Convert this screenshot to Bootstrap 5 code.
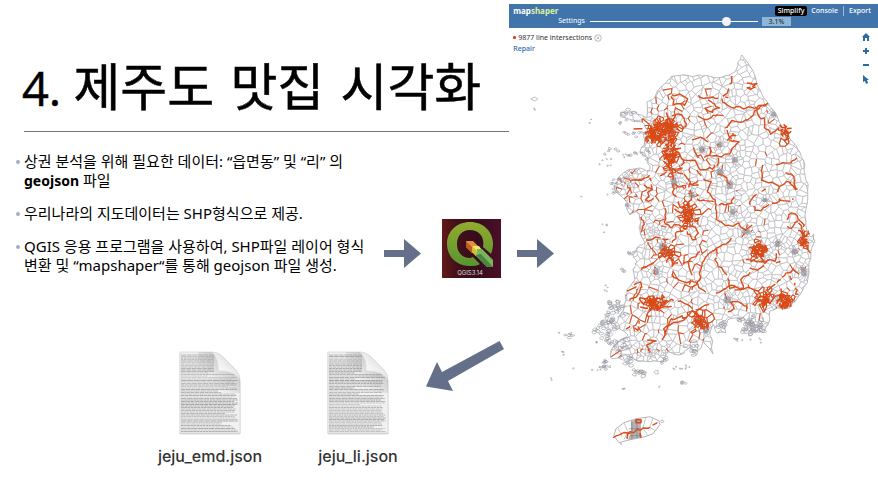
<!DOCTYPE html>
<html lang="ko">
<head>
<meta charset="utf-8">
<meta name="viewport" content="width=device-width, initial-scale=1">
<title>제주도 맛집 시각화</title>
<link href="https://cdn.jsdelivr.net/npm/bootstrap@5.3.0/dist/css/bootstrap.min.css" rel="stylesheet">
<script src="https://cdn.jsdelivr.net/npm/bootstrap@5.3.0/dist/js/bootstrap.bundle.min.js" defer></script>
<style>
body{font-family:"Open Sans","Noto Sans CJK KR",sans-serif;color:#000;background:#fff}
.left-side{flex:58 1 0;min-width:0}
.right-side{flex:42 1 0;min-width:0;padding-top:4px;font-family:"Noto Sans","Noto Sans CJK KR",sans-serif}
.slide-title{font-size:51px;line-height:64px;font-weight:400;padding:56px 0 0 22px;margin:0;white-space:pre;-webkit-text-stroke:.5px #000;font-family:"DejaVu Sans","Noto Sans CJK KR",sans-serif}
.slide-title span{font-family:"Open Sans",sans-serif;font-size:47px}
.rule{margin:10px 0 0 24px;border-top:1px solid #777}
.flow{padding:20px 8px 0 16px}
.points{width:360px;font-size:15px;line-height:19px;font-family:"Noto Sans","Noto Sans CJK KR",sans-serif}
.points b{font-size:14px}
.points li{position:relative;padding-left:8px;margin-bottom:14px;white-space:nowrap}
.points li::before{content:"";position:absolute;left:0;top:8px;width:4px;height:4px;border-radius:50%;background:#a5aec0}
.arrow{fill:#64708a;display:block}
.to-qgis{margin:87px 0 0 8px}
.qgis{margin:67px 0 0 21px}
.files{padding:51px 0 0 150px}
.file-item{width:120px;font-family:Inter,sans-serif;font-size:16px;line-height:24px;color:#333;font-weight:500}
.file-item figcaption{margin-top:6px}
.file-row{gap:28px;padding-top:10px}
.back{margin:0 0 0 8px}
.app-bar{background:#4174ab;color:#fff;font-size:7px;line-height:10px;height:24px;padding:1px 7px 0 4px}
.brand{font-weight:700;font-size:8px;line-height:11px;color:#fff;text-decoration:none}
.brand span{color:#dff29a}
.bar-btn{border:0;background:none;color:#fff;font-size:7px;line-height:10px;padding:0 5px;font-weight:500}
.bar-btn.on{background:#000;border-radius:2px;padding:0 3px}
.bar-btn.sep{border-left:1px solid #9dbbd8}
.set-row{padding-left:45px}
.pct{width:29px;height:9px;border:0;background:#8fb6d9;font-size:7px;line-height:9px;text-align:center;color:#222;padding:0;margin-left:4px}
.slide-in{-webkit-appearance:none;appearance:none;width:168px;height:9px;background:none;margin:0 0 0 5px;flex:0 1 168px;min-width:0}
.slide-in::-webkit-slider-runnable-track{height:1px;background:#fff}
.slide-in::-webkit-slider-thumb{-webkit-appearance:none;width:9px;height:9px;margin-top:-4px;border-radius:50%;background:#f3f3f3;border:0}
.map-area{position:relative}
.map-svg{display:block;width:100%;height:auto}
.notice{position:absolute;left:4px;top:4px;font-size:7px;line-height:11px;color:#333}
.notice a{color:#2c6ca5;text-decoration:none;font-weight:500}
.notice-line{gap:2px}
.dotm{width:3px;height:3px;background:#d9481c;border-radius:1px}
.tools{position:absolute;right:8px;top:4px;gap:4px}
.tools button{border:0;background:none;padding:0;line-height:0}
.to-map{position:absolute;left:8px;top:211px}
</style>
</head>
<body>
<main class="d-flex align-items-start">
<section class="left-side">
  <h1 class="slide-title"><span>4. </span>제주도 맛집 시각화</h1>
  <div class="rule"></div>
  <div class="flow d-flex align-items-start">
    <ul class="points list-unstyled mb-0 flex-shrink-0">
      <li>상권 분석을 위해 필요한 데이터: “읍면동” 및 “리” 의<br><b>geojson</b> 파일</li>
      <li>우리나라의 지도데이터는 SHP형식으로 제공.</li>
      <li>QGIS 응용 프로그램을 사용하여, SHP파일 레이어 형식<br>변환 및 “mapshaper“를 통해 geojson 파일 생성.</li>
    </ul>
    <svg class="arrow to-qgis flex-shrink-0" width="37" height="29"><path d="M0 11H20V0L37 14.500 20 29V18H0Z"/></svg>
    <svg class="qgis flex-shrink-0" width="59" height="59" viewBox="0 0 59 59" role="img" aria-label="QGIS3.14">
      <defs>
        <linearGradient id="qbg"><stop offset="0" stop-color="#611a18"/><stop offset=".25" stop-color="#421019"/><stop offset=".6" stop-color="#360c1c"/><stop offset="1" stop-color="#4b1028"/></linearGradient>
        <linearGradient id="qg" x2="0" y2="1"><stop offset="0" stop-color="#92ab30"/><stop offset="1" stop-color="#58942f"/></linearGradient>
      </defs>
      <rect width="59" height="59" fill="url(#qbg)"/>
      <path fill="url(#qg)" fill-rule="evenodd" d="M28 3C41 3 51 12 51 25C51 29 50 32 49 35L41 28C43 18 37 11 28 11C20 11 15 17 15 25C15 33 20 39 28 39L31 38L38 45C35 47 32 47 28 47C15 47 5 38 5 25C5 12 15 3 28 3Z"/>
      <path fill="#df9045" d="M24 22H31L37 28 30 34 24 28Z"/><path fill="#bd5c22" d="M24 22L30 28V34L24 28Z"/>
      <path fill="#f0e664" d="M31 27H37L40 31 34 37 30 33Z"/><path fill="#d0bb32" d="M30 27L34 31V37L30 33Z"/>
      <path fill="#78b55c" d="M35 30H40L51 41V48H45L34 37Z"/><path fill="#4b873c" d="M34 36L39 35 51 48H45Z"/>
      <text x="28" y="56" fill="#ddd" text-anchor="middle" font-family="Inter,sans-serif" font-size="6">QGIS3.14</text>
    </svg>
  </div>
  <div class="files d-flex align-items-start">
    <div class="file-row d-flex" id="files"></div>
    <svg class="arrow back flex-shrink-0" width="78" height="52" viewBox="426 336 78 52"><path d="M499.500 337L504 345 448 377 453 387 426 382.500 437 358 442 368Z"/></svg>
  </div>
</section>
<section class="right-side">
  <header class="app-bar">
    <div class="d-flex justify-content-between align-items-center">
      <a class="brand" href="#">map<span>shaper</span></a>
      <nav class="d-flex"><button class="bar-btn on me-1" type="button">Simplify</button><button class="bar-btn ps-0" type="button">Console</button><button class="bar-btn sep pe-0" type="button">Export</button></nav>
    </div>
    <div class="set-row d-flex align-items-center"><label for="amount">Settings</label><input class="slide-in" id="amount" type="range" min="0" max="100" value="83"><input class="pct" type="text" value="3.1%" aria-label="percent"></div>
  </header>
  <div class="map-area">
    <svg class="map-svg" id="map" viewBox="509 28 369 449"></svg>
    <div class="notice"><div class="notice-line d-flex align-items-center"><span class="dotm"></span><span>9877 line intersections</span>
      <svg width="8" height="8" fill="none" stroke="#aaa" stroke-width=".8"><circle cx="4" cy="4" r="3.300"/><path d="M2.700 2.700L5.300 5.300M5.300 2.700L2.700 5.300"/></svg></div><a href="#">Repair</a></div>
    <div class="tools d-flex flex-column align-items-center">
      <button type="button" aria-label="Home"><svg width="8" height="10" fill="#2b6ca6"><path d="M4 1L8 5H7V9H5V6H3V9H1V5H0Z"/></svg></button>
      <button type="button" aria-label="Zoom in"><svg width="8" height="10" fill="#2b6ca6"><path d="M3 2H5V4H7V6H5V8H3V6H1V4H3Z"/></svg></button>
      <button type="button" aria-label="Zoom out"><svg width="8" height="10" fill="#2b6ca6"><path d="M1 4H7V6H1Z"/></svg></button>
      <button type="button" aria-label="Select"><svg width="8" height="10" fill="#2b6ca6"><path d="M1 1L7 6H5L6 9 4 10 3 7 1 8Z"/></svg></button>
    </div>
    <svg class="arrow to-map" width="37" height="29"><path d="M0 11H20V0L37 14.500 20 29V18H0Z"/></svg>
  </div>
</section>
</main>
<script>
let seed=7;
const rnd=()=>{seed=(seed*1664525+1013904223)%4294967296;return seed/4294967296};
const gauss=()=>(rnd()+rnd()+rnd()-1.5)*1.3;
const f=n=>n.toFixed(1);
const coast=[742,55,750,66,757,85,768,103,778,118,786,132,793,142,800,152,805,165,806,180,808,195,806,210,806,225,808,237,814,234,815,241,811,252,809,270,808,280,803,290,795,302,790,308,778,308,770,311,768,325,762,333,748,330,745,320,738,318,728,320,726,333,716,332,713,325,710,335,713,354,703,342,697,355,690,348,680,355,668,352,663,362,650,362,635,360,625,355,612,359,611,351,621,340,628,335,615,325,622,312,626,300,627,290,635,280,633,270,637,262,633,255,640,245,645,243,640,230,641,222,637,212,630,215,625,200,615,190,618,178,628,170,640,168,650,170,648,158,640,152,645,140,643,133,648,130,642,122,622,117,621,112,635,112,647,118,647,102,655,97,660,88,668,80,675,76,700,75,712,77,725,76,735,72,738,62];
const jeju=[614,436,616,429,624,423,636,419,650,417,659,421,660,425,653,434,645,437,635,439,626,441,619,443];
const cities=[[657,133,13,10,110,1],[670,127,7,9,50,1],[670,155,5,16,60,1],[688,216,6,9,55,1],[655,303,8,6,55,1],[760,250,8,7,55,1],[765,299,9,6,50,1],[784,302,8,6,50,1],[668,253,6,5,28,1],[803,240,3,6,22,1],[787,134,3,7,22,1],[700,322,7,7,28,1],[774,114,4,4,18,0],[702,150,4,4,16,0],[720,145,4,4,16,0],[692,195,4,4,18,0],[733,212,4,4,18,0],[765,200,4,3,16,0],[778,244,4,5,18,0],[795,252,5,4,18,0],[804,272,4,7,30,0],[656,272,4,5,22,0],[735,160,4,4,16,0],[720,172,5,5,18,0],[663,247,6,5,20,0],[730,185,5,6,12,0],[746,232,6,4,18,0],[674,182,4,7,22,0],[728,300,5,5,18,0],[706,330,4,5,18,0],[630,180,11,12,45,0],[752,327,9,6,40,0],[650,230,14,12,40,0],[650,350,18,10,45,0]];
const pts=[];
for(let y=52;y<368;y+=6.5)for(let x=608;x<822;x+=6.5)pts.push([x+rnd()*9,y+rnd()*9]);
cities.forEach(c=>{for(let i=0;i<c[4];i++)pts.push([c[0]+gauss()*c[2],c[1]+gauss()*c[3]])});
function cell(p){
  let q=[[p[0]-12,p[1]-12],[p[0]+12,p[1]-12],[p[0]+12,p[1]+12],[p[0]-12,p[1]+12]];
  for(const o of pts){
    const dx=o[0]-p[0],dy=o[1]-p[1];
    if(o===p||Math.abs(dx)>20||Math.abs(dy)>20)continue;
    const k=(o[0]*o[0]+o[1]*o[1]-p[0]*p[0]-p[1]*p[1])/2,r=[];
    for(let i=0;i<q.length;i++){
      const a=q[i],b=q[(i+1)%q.length],s=a[0]*dx+a[1]*dy-k,t=b[0]*dx+b[1]*dy-k;
      if(s<=0)r.push(a);
      if(s*t<0){const u=s/(s-t);r.push([a[0]+(b[0]-a[0])*u,a[1]+(b[1]-a[1])*u])}
    }
    q=r;
  }
  return q;
}
let mesh='',hot='',scatter='';
const gap=(x,y)=>Math.min(...cities.filter(c=>c[5]).map(c=>Math.hypot((x-c[0])/c[2],(y-c[1])/c[3])));
for(const p of pts){
  const q=cell(p);if(q.length<3)continue;
  mesh+='M'+q.map(a=>f(a[0])+' '+f(a[1])).join('L')+'Z';
  const g=gap(p[0],p[1]);
  if(rnd()<(g<.9?.5:g<1.5?.3:0))hot+='M'+q.map(a=>f(a[0])+' '+f(a[1])).join('L')+'Z';
  else{
    const west=p[0]<715&&p[1]>90;
    if(rnd()<(west?.18:.07)&&!(p[0]>715&&p[1]<110))scatter+='M'+q.slice(0,west?3:2).map(a=>f(a[0])+' '+f(a[1])).join('L');
  }
}
// Boundary lines running across the provinces
const routes=[[732,76,729,92,723,99],[672,95,680,94,687,99,685,105,674,104,671,96],[672,116,682,115,687,124,684,129],[697,93,700,98,712,97,720,100,728,96],[698,116,708,119,713,117,722,115],[708,100,715,103,719,108,712,112,706,108],[722,99,730,107,742,108,757,108,768,104,758,108,751,117,740,122,731,121,725,129,731,138],[757,108,758,115,765,118,764,128,770,133,780,129,786,136],[747,83,756,84,748,89,756,87],[692,140,700,138,709,141,710,156,697,158,694,148],[710,156,722,157,730,153,738,141,730,141],[671,140,676,151,684,160,681,168,670,170,664,162],[684,160,695,161,701,169,715,167,720,157],[763,165,761,180,772,183,780,186,789,182,797,190,794,177,787,172],[780,186,780,201,788,203,795,198],[780,201,769,205,759,211,750,205,754,195,765,191],[797,158,790,163,777,164],[630,179,641,181,650,175,651,190,645,201,653,199],[671,170,673,180,674,192,680,207,688,204,692,196],[697,170,703,180,712,183,707,192,716,200,717,220],[717,220,726,225,738,224,746,230,751,225],[697,199,706,200,716,202],[641,217,645,224,642,232],[665,208,665,222,670,228,678,225,688,230],[672,243,677,232,686,232,696,240,698,230,690,222],[717,248,728,243,732,238],[717,248,705,258,700,270,701,280],[717,248,716,261,728,276,731,288,737,285],[641,268,648,267,653,263,660,256,668,254,674,260],[670,255,672,265,688,262,693,276,690,285],[688,262,700,252],[672,274,682,283,695,281,704,292],[646,240,653,239,660,237,669,240],[627,291,640,286,638,296,626,302],[634,285,642,282,641,291],[655,302,675,301,688,304,695,310,708,305],[645,318,650,310,672,307],[662,340,669,326,683,320,692,312,704,318,709,331],[672,320,679,316,687,319],[626,329,632,326,638,329,641,318],[645,342,655,341,648,345,648,352],[666,335,664,328,674,319],[716,293,731,286,744,290,742,280,750,274],[728,312,736,307,731,302,743,303,749,309],[735,290,748,287,760,292],[764,293,775,285,782,277,793,270,800,275],[750,268,758,270,769,260,779,262],[746,260,760,262,774,260,778,251],[785,225,792,228,798,221,804,235],[787,220,789,214,798,216,803,225,803,240,810,252],[718,174,727,176,729,185],[719,205,731,203,734,196],[733,133,736,136,727,141],[790,276,796,285,797,296],[660,176,673,170,685,174,691,184,700,186],[676,185,685,189,698,181],[613,438,622,434,635,432,650,427,658,423],[692,290,700,280],[644,185,653,190]];
let roads='';
routes.forEach(r=>{
  let d='M'+r[0]+' '+r[1];
  for(let i=2;i<r.length;i+=2){
    const ax=r[i-2],ay=r[i-1],n=Math.max(2,Math.round(Math.hypot(r[i]-ax,r[i+1]-ay)/3));
    for(let j=1;j<=n;j++)d+=(rnd()<.1?'M':'L')+f(ax+(r[i]-ax)*j/n+gauss()*1.3)+' '+f(ay+(r[i+1]-ay)*j/n+gauss()*1.3);
  }
  roads+=d;
});
// Offshore islands: centre, spread, count, size
const groups=[[534,99,1,1,1,4],[535,110,2,2,2,1],[591,121,1,2,2,1],[620,122,5,2,3,2],[633,133,8,3,8,2],[612,151,5,2,5,2],[624,155,9,3,7,1],[641,153,8,4,9,2],[607,162,4,5,6,1],[628,113,6,3,5,3],[618,185,6,9,9,2],[613,193,3,3,3,2],[582,196,1,1,1,1],[604,189,8,6,2,1],[628,207,2,6,5,2],[608,225,4,1,3,1],[605,233,1,1,1,1],[632,254,5,3,5,2],[623,270,2,2,3,2],[607,288,3,3,4,1],[615,307,9,6,20,3],[610,320,5,5,10,3],[605,331,8,8,24,3],[611,343,6,5,10,2],[595,342,2,1,3,1],[570,335,4,2,5,2],[558,334,1,1,1,1],[563,353,1,2,3,1],[605,364,5,5,12,2],[552,379,1,1,2,1],[598,370,5,3,4,1],[573,369,1,1,1,1],[640,373,5,3,10,3],[657,373,1,1,1,3],[624,389,1,1,3,1],[660,387,1,1,1,1],[682,383,2,1,4,2],[680,369,7,2,6,1],[667,360,4,3,6,2],[688,366,5,2,3,1],[738,341,4,2,6,1],[758,340,5,3,4,1],[754,328,10,7,24,3],[747,320,9,4,9,3],[724,326,5,4,7,3],[693,350,7,6,9,3],[628,358,5,6,8,3],[622,346,6,6,8,4],[662,421,1,1,1,2],[620,445,1,1,1,1]];
let isles='';
groups.forEach(([x,y,sx,sy,n,s])=>{for(let i=0;i<n;i++){
  const cx=x+gauss()*sx,cy=y+gauss()*sy,q=[];
  for(let a=0;a<6;a++){const r=s*(.4+rnd()*.7);q.push(f(cx+Math.cos(a*1.05)*r)+' '+f(cy+Math.sin(a*1.05)*r*.7))}
  isles+='M'+q.join('L')+'Z';
}});
const shape=a=>a.reduce((d,v,i)=>d+(i?(i%2?' ':'L'):'M')+v,'')+'Z';
const rough=a=>{let d='';for(let i=0;i<a.length;i+=2){const j=(i+2)%a.length;for(let k=0;k<3;k++)d+=(d?'L':'M')+f(a[i]+(a[j]-a[i])*k/3+(k?gauss()*1.3:0))+' '+f(a[i+1]+(a[j+1]-a[i+1])*k/3+(k?gauss()*1.3:0))}return d+'Z'};
const land=rough(coast);
const grey=cities.filter(c=>c[4]<60&&c[2]<8).map(c=>`<ellipse cx="${c[0]}" cy="${c[1]}" rx="${c[2]*.7}" ry="${c[3]*.7}"/>`).join('');
const red=cities.filter(c=>c[5]).map(c=>{let d='';for(let i=0;i<c[4]/2.5;i++){d+='M'+f(c[0]+gauss()*c[2]*.7)+' '+f(c[1]+gauss()*c[3]*.7)+'l'+f(gauss()*4)+' '+f(gauss()*4)+'l'+f(gauss()*4)+' '+f(gauss()*4)}return d}).join('');
document.getElementById('map').innerHTML=`<defs><clipPath id="land"><path d="${land}"/></clipPath></defs>
<g fill="none" stroke-linejoin="round"><g clip-path="url(#land)"><path d="${mesh}" stroke="#b6b7bd" stroke-width=".5"/><g fill="#77787f" opacity=".5">${grey}</g><path d="${scatter}" stroke="#dc5527" stroke-width="1.1"/><path d="${hot}" stroke="#da4a17" stroke-width="1.1"/></g>
<path d="${land}" stroke="#aaabb1" stroke-width=".8"/><path d="${isles}" stroke="#96979f" stroke-width=".6"/>
<path d="${shape(jeju)}" stroke="#aaabb1" stroke-width=".9"/><path d="M624 423L628 432 624 440M646 418L643 428 648 436M653 418L650 428 656 431M618 428L622 437" stroke="#bbb" stroke-width=".8"/>
<path d="M631 421L641 419 641 438 628 440 631 433Z" fill="#999aa0" opacity=".75"/><path d="M632 422V439M637 421V438M629 429H641M630 436H642" stroke="#777" stroke-width=".6"/><path d="M636 420H641V423H636ZM627 439L628 434 631 433M640 433L641 438" stroke="#da4a17" stroke-width="1.600"/>
<path d="${roads}" stroke="#da4f1e" stroke-width="1.4"/><path d="${red}" stroke="#da4a17" stroke-width="1.5"/></g>`;
// Document icons
const page=n=>{
  let t='';
  for(let y=4;y<81;y+=1.5){
    const w=y<22?33:rnd()<.25?25+rnd()*30:52+rnd()*5;
    t+=`<path d="M3 ${y}H${f(3+w)}" stroke="#a6a6a6" stroke-width="${f(.5+rnd()*.5)}" stroke-dasharray="${f(2+rnd()*4)} .5"/>`;
  }
  const edge='M2 1H32Q40 1 45 6L57 18Q62 23 62 30V82H2Z';
  return `<svg width="66" height="88" viewBox="-1 -1 66 88" aria-hidden="true"><defs><linearGradient id="fold${n}" x1="0" y1="1" x2="1" y2="0"><stop offset="0" stop-color="#fff"/><stop offset=".4" stop-color="#f4f4f4"/><stop offset="1" stop-color="#ccc"/></linearGradient><linearGradient id="shade${n}" x1="0" y1="1" x2="1" y2="0"><stop offset=".3" stop-color="#999" stop-opacity="0"/><stop offset="1" stop-color="#888" stop-opacity=".7"/></linearGradient></defs>
<path d="${edge}" transform="translate(0 1)" fill="#ccc" stroke="#ddd"/><path d="${edge}" fill="#f1f1f1" stroke="#cfcfcf" stroke-width=".6"/>${t}
<path d="M20 1H34Q41 8 40 20Q55 19 62 29V42H20Z" fill="url(#shade${n})"/><path d="M34 1Q41 8 40 20Q55 19 62 28Q61 22 57 18L45 6Q40 1 34 1Z" fill="url(#fold${n})" stroke="#d4d4d4" stroke-width=".6"/></svg>`;
};
document.getElementById('files').innerHTML=['jeju_emd.json','jeju_li.json'].map((n,i)=>`<figure class="file-item text-center mb-0">${page(i)}<figcaption>${n}</figcaption></figure>`).join('');
</script>
</body>
</html>
